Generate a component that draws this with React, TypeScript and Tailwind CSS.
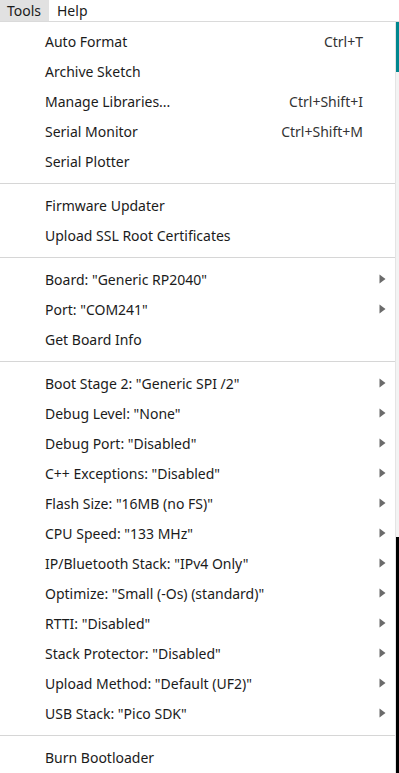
import { ReactNode } from "react";

type Item =
  | { kind: "item"; label: string; shortcut?: string; sub?: boolean }
  | { kind: "sep" };

const items: Item[] = [
  { kind: "item", label: "Auto Format", shortcut: "Ctrl+T" },
  { kind: "item", label: "Archive Sketch" },
  { kind: "item", label: "Manage Libraries...", shortcut: "Ctrl+Shift+I" },
  { kind: "item", label: "Serial Monitor", shortcut: "Ctrl+Shift+M" },
  { kind: "item", label: "Serial Plotter" },
  { kind: "sep" },
  { kind: "item", label: "Firmware Updater" },
  { kind: "item", label: "Upload SSL Root Certificates" },
  { kind: "sep" },
  { kind: "item", label: 'Board: "Generic RP2040"', sub: true },
  { kind: "item", label: 'Port: "COM241"', sub: true },
  { kind: "item", label: "Get Board Info" },
  { kind: "sep" },
  { kind: "item", label: 'Boot Stage 2: "Generic SPI /2"', sub: true },
  { kind: "item", label: 'Debug Level: "None"', sub: true },
  { kind: "item", label: 'Debug Port: "Disabled"', sub: true },
  { kind: "item", label: 'C++ Exceptions: "Disabled"', sub: true },
  { kind: "item", label: 'Flash Size: "16MB (no FS)"', sub: true },
  { kind: "item", label: 'CPU Speed: "133 MHz"', sub: true },
  { kind: "item", label: 'IP/Bluetooth Stack: "IPv4 Only"', sub: true },
  { kind: "item", label: 'Optimize: "Small (-Os) (standard)"', sub: true },
  { kind: "item", label: 'RTTI: "Disabled"', sub: true },
  { kind: "item", label: 'Stack Protector: "Disabled"', sub: true },
  { kind: "item", label: 'Upload Method: "Default (UF2)"', sub: true },
  { kind: "item", label: 'USB Stack: "Pico SDK"', sub: true },
  { kind: "sep" },
  { kind: "item", label: "Burn Bootloader" },
];

function Arrow() {
  return (
    <svg width="7" height="10" viewBox="0 0 7 10" className="shrink-0">
      <path d="M0.5 0.5 L6.5 5 L0.5 9.5 Z" fill="#6b6b6b" />
    </svg>
  );
}

function MenuRow({ children }: { children: ReactNode }) {
  return <div className="h-[30px] flex items-center pl-[45px] pr-[9px]">{children}</div>;
}

export default function App() {
  return (
    <div
      className="w-[399px] h-[773px] overflow-hidden bg-white text-[#1b1b1b] flex flex-col"
      style={{ fontFamily: '"Noto Sans", "Open Sans", Arial, sans-serif' }}
    >
      {/* menu bar */}
      <div className="h-[22px] flex items-stretch border-b border-[#dadada] text-[14px] shrink-0">
        <div className="w-[49px] bg-[#e1e1e1] flex items-center pl-[7px]">Tools</div>
        <div className="flex items-center pl-[8px]">Help</div>
      </div>

      <div className="flex flex-1 min-h-0">
        {/* dropdown */}
        <div className="w-[396px] border-r border-[#e4e4e4] pt-[4px] text-[14px]">
          {items.map((it, i) =>
            it.kind === "sep" ? (
              <div key={i} className="h-[14px] flex items-center">
                <div className="h-px w-full bg-[#d6d6d6]" />
              </div>
            ) : (
              <MenuRow key={i}>
                <span className="flex-1 whitespace-nowrap">{it.label}</span>
                {it.shortcut && <span className="mr-[23px] text-[#333]">{it.shortcut}</span>}
                {it.sub && <Arrow />}
              </MenuRow>
            )
          )}
        </div>

        {/* window behind */}
        <div className="flex-1 flex flex-col">
          <div className="h-[50px] bg-[#00878f]" />
          <div className="flex-1 bg-[#f3f3f3]" />
          <div className="h-[236px] bg-black" />
        </div>
      </div>
    </div>
  );
}
